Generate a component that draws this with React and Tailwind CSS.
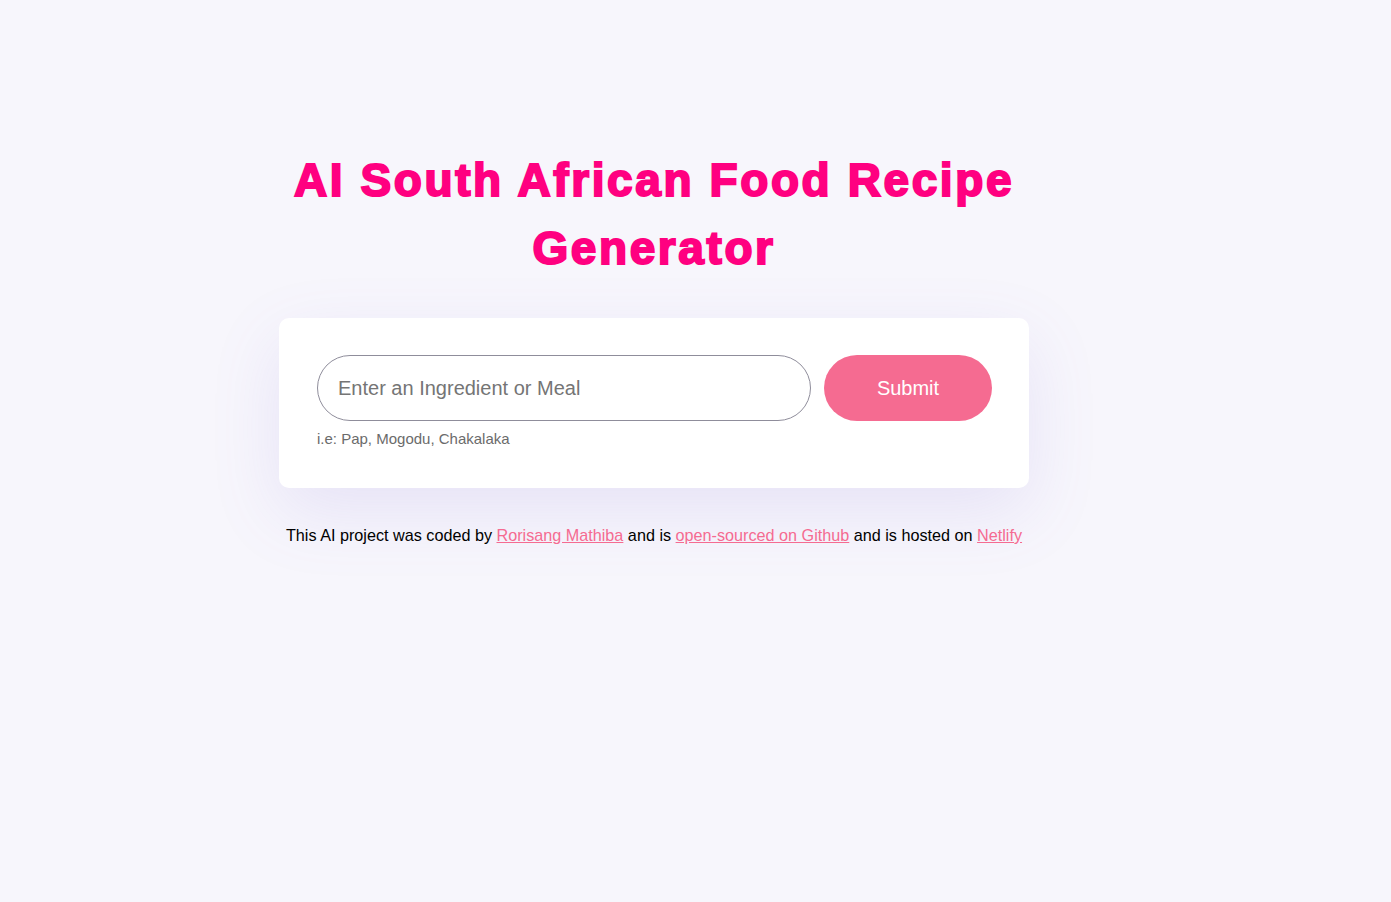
export default function App() {
  return (
    <div className="min-h-screen w-full bg-[#f7f6fc] font-['Liberation_Sans',Arial,sans-serif]">
      <div className="ml-[279px] w-[750px] pt-[146px]">
        <h1 className="text-center text-[46px] leading-[68px] font-bold tracking-[2.6px] text-[#ff0080] [-webkit-text-stroke:2px_#ff0080]">
          AI South African Food Recipe Generator
        </h1>

        <form
          className="mt-[36px] rounded-[10px] bg-white pl-[38px] pr-[37px] pt-[37px] pb-[41px] shadow-[0_24px_70px_rgba(120,100,210,0.13)]"
          onSubmit={(e) => e.preventDefault()}
        >
          <div className="flex gap-[13px]">
            <input
              type="text"
              placeholder="Enter an Ingredient or Meal"
              className="h-[66px] flex-1 rounded-full border border-[#8f8d9b] bg-white px-[20px] text-[20px] text-[#333] placeholder:text-[#757575] outline-none"
            />
            <button
              type="submit"
              className="h-[66px] w-[168px] rounded-full bg-[#f56b91] text-[20px] text-white"
            >
              Submit
            </button>
          </div>
          <p className="mt-[9px] text-[15px] leading-[17px] text-[#6b6b6b]">i.e: Pap, Mogodu, Chakalaka</p>
        </form>

        <footer className="mt-[38px] text-center text-[16.2px] leading-[19px] text-black">
          This AI project was coded by{' '}
          <a href="#" className="text-[#f56b91] underline">Rorisang Mathiba</a> and is{' '}
          <a href="#" className="text-[#f56b91] underline">open-sourced on Github</a> and is hosted on{' '}
          <a href="#" className="text-[#f56b91] underline">Netlify</a>
        </footer>
      </div>
    </div>
  )
}
